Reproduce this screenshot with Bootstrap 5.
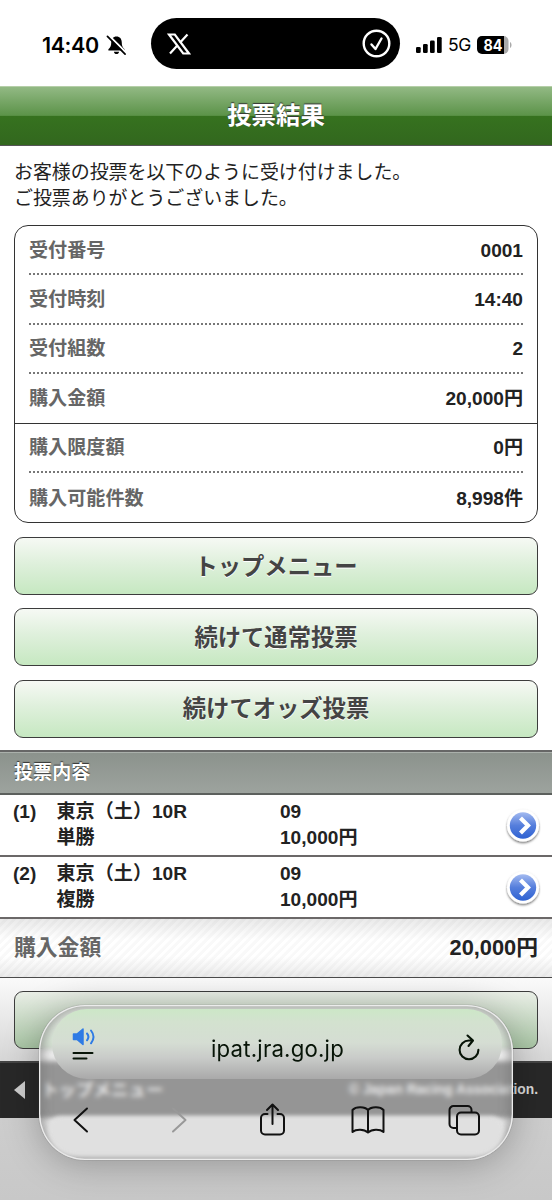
<!DOCTYPE html>
<html lang="ja">
<head>
<meta charset="utf-8">
<meta name="viewport" content="width=device-width, initial-scale=1">
<title>投票結果</title>
<link href="https://cdn.jsdelivr.net/npm/bootstrap@5.3.0/dist/css/bootstrap.min.css" rel="stylesheet">
<style>
body{font-family:"Liberation Sans","Noto Sans CJK JP",sans-serif;font-size:19.1px;line-height:26px;color:#222;background:#fff}
.screen{width:552px;height:1200px}
.status-bar{height:86px;padding-top:3px;color:#000;font-family:Inter,sans-serif}
.clock{font-size:21.5px;font-weight:600;letter-spacing:-.4px;width:60px;margin-left:42px}
.island{width:249px;height:51px;border-radius:26px;background:#000;margin:-2px 0 0 24px;padding:0 9px 0 16px}
.net{font-size:17.5px;margin-left:6px;width:24px;letter-spacing:-.3px}
.title-bar{height:60px;border-top:1px solid #b5cfa8;border-bottom:1px solid #555;background:linear-gradient(#92b984 0,#5c9349 49%,#36721f 50%,#32671e 100%);color:#fff;font-size:24.4px;font-weight:700;text-shadow:0 -1px 1px #333}
.intro{padding:14px 14px 0;height:79px;font-size:18.95px;letter-spacing:-.02px}
.summary{margin:0 14px;border:1.5px solid #333;border-radius:14px;height:298px}
.line{height:49.4px;margin:0 14px;padding-top:2px;border-bottom:2px dotted #777;font-weight:700;color:#222}
.line .name,.total .name{color:#666}
.line.wide{margin:0;padding:2px 14px 0;border-bottom:1.5px solid #333}
.btn.menu{--bs-btn-color:#444;--bs-btn-border-color:#3c3c3c;--bs-btn-border-radius:9px;height:58px;padding-top:8px;border-width:1.5px;background:linear-gradient(#f6f9f4,#dff0dc 45%,#c6e8c1);font-size:23.3px;font-weight:700;text-shadow:0 1px 0 #fff}
.stack{padding:14px 14px 12px;gap:13.4px}
.section-bar{height:45px;padding:1px 14px 0;border-top:2px solid #666;border-bottom:2px solid #5c605d;background:linear-gradient(#8b928c,#9da39e);box-shadow:inset 0 1px #aab0ab;color:#fff;font-weight:700;text-shadow:0 -1px 1px #333}
.bet{display:grid;grid-template-columns:43.5px 223.5px 1fr 37px;height:62px;padding:4px 12px 0 13px;border-bottom:2px solid #6b6868;font-weight:700}
.bet svg{margin-top:7px}
.total{height:59px;padding:1px 14px 0;border-bottom:1.5px solid #4b4b4b;background:linear-gradient(#00000016,#0000 35%,#0000 65%,#00000014),repeating-linear-gradient(135deg,#fff 0 2.5px,#f9f9f9 3.5px 6px);font-size:21.8px;font-weight:700}
.tail{height:83px;padding:13.5px 14px 0;background:linear-gradient(#fafafa,#d6d6d6)}
.tail .btn.menu{background:linear-gradient(#e9eee6,#a8c5a4)}
.foot{height:57px;padding:0 14px;background:#282828;border-top:2px solid #444;color:#d8d8d8}
.foot-menu{font-size:17.5px;font-weight:700;gap:16px}
.copy{font-size:13.8px;font-weight:700}
.under{background:linear-gradient(#cdcdcd,#c8c8c8)}
.toolbar{left:39px;top:1005px;width:474px;height:155px;border-radius:46px;background:rgba(255,255,255,.51);backdrop-filter:blur(2.5px);box-shadow:0 4px 36px rgba(0,0,0,.27),0 0 1px #555,inset 0 0 0 1.3px #ececec,inset 0 0 10px 5px rgba(115,115,115,.55);z-index:2}
.address{height:70px;margin:4px 11px 0 13px;border-radius:36px;background:linear-gradient(#cce7c7 0,#d3e2cf 18%,#d5ddd3 48%,#c9cbc9 70%,#a9a9a9 100%);padding:10px 21px 0 20px;font-family:Inter,sans-serif;font-size:22.2px;color:#071407}
.url{letter-spacing:.2px;padding-left:2px}
.speak{margin-top:-10px}
.keys{padding:23px 33px 0 26px}
.glow{left:9px;right:9px;bottom:4px;height:40px;border-radius:20px 20px 40px 40px;background:#e0e0e0;filter:blur(2px)}
</style>
</head>
<body>
<svg width="0" height="0" class="position-absolute"><defs>
<linearGradient id="ball" x2="0" y2="1"><stop stop-color="#a3baf0"/><stop offset=".5" stop-color="#557edc"/><stop offset="1" stop-color="#2f62d2"/></linearGradient>
<filter id="soft" x="-20%" y="-20%" width="140%" height="150%"><feDropShadow dx="0" dy="1.5" stdDeviation="1.2" flood-opacity=".55"/></filter>
<symbol id="go" viewBox="0 0 40 40"><circle cx="20" cy="19.500" r="16" fill="#fff" filter="url(#soft)"/><circle cx="20" cy="19.500" r="13.200" fill="url(#ball)"/><path d="M17.500 12l7.500 7.500-7.500 7.500" fill="none" stroke="#fff" stroke-width="4.200"/></symbol>
</defs></svg>
<main class="screen position-relative overflow-hidden d-flex flex-column">
  <header class="status-bar d-flex align-items-center flex-shrink-0">
    <div class="clock">14:40</div>
    <svg class="ms-1" width="21" height="22" viewBox="1 1 22 22"><path d="M12 3c-3.500 0-5.500 2.500-5.500 6 0 4-1 5.500-3 7.500v1.200h17v-1.200c-2-2-3-3.500-3-7.500 0-3.500-2-6-5.500-6zM9.300 19h5.400c-.3 3.200-5.100 3.200-5.400 0z"/><path d="M4.500 2.500l18 18" stroke="#fff" stroke-width="2.200"/><path d="M2.500 3l18.500 18.500" stroke="#000" stroke-width="1.800" stroke-linecap="round"/></svg>
    <div class="island d-flex align-items-center justify-content-between">
      <svg width="24" height="24" viewBox="0 0 24 24"><path d="M2 2.500h5.800L22 21.500h-5.800zM20.500 2.500l-7.800 8.600M3 21.500l8-8.800" fill="none" stroke="#fff" stroke-width="2.200"/></svg>
      <svg width="29" height="29" viewBox="0 0 29 29" fill="none" stroke="#fff" stroke-width="2.400" stroke-linecap="round" stroke-linejoin="round"><circle cx="14.500" cy="14.500" r="12.800"/><path d="M9.500 15.500l4 4.500L19.500 9.500"/></svg>
    </div>
    <svg class="ms-3" width="26" height="16" viewBox="0 0 26 16"><rect y="10" width="4.700" height="6" rx="1.300"/><rect x="7" y="7" width="4.700" height="9" rx="1.300"/><rect x="14" y="3.500" width="4.700" height="12.500" rx="1.300"/><rect x="21" width="4.700" height="16" rx="1.300"/></svg>
    <div class="net">5G</div>
    <svg class="ms-1" width="38" height="20" viewBox="0 0 38 20"><path d="M26 1h1.500a5 5 0 0 1 5 5v8a5 5 0 0 1-5 5H26z" fill="#aaa"/><path d="M34 7c2 1 2 5 0 6z" fill="#aaa"/><path d="M6 1h22v18H6a5 5 0 0 1-5-5V6a5 5 0 0 1 5-5z"/><text x="17" y="15.500" text-anchor="middle" textLength="19" lengthAdjust="spacingAndGlyphs" font-family="Inter" font-size="15.500" font-weight="700" fill="#fff">84</text></svg>
  </header>
  <h1 class="title-bar d-flex align-items-center justify-content-center flex-shrink-0 m-0">投票結果</h1>
  <p class="intro m-0 flex-shrink-0">お客様の投票を以下のように受け付けました。<br>ご投票ありがとうございました。</p>
  <section class="summary flex-shrink-0">
    <div class="line d-flex align-items-center justify-content-between"><span class="name">受付番号</span><span>0001</span></div>
    <div class="line d-flex align-items-center justify-content-between"><span class="name">受付時刻</span><span>14:40</span></div>
    <div class="line d-flex align-items-center justify-content-between"><span class="name">受付組数</span><span>2</span></div>
    <div class="line wide d-flex align-items-center justify-content-between"><span class="name">購入金額</span><span>20,000円</span></div>
    <div class="line d-flex align-items-center justify-content-between"><span class="name">購入限度額</span><span>0円</span></div>
    <div class="line border-0 d-flex align-items-center justify-content-between"><span class="name">購入可能件数</span><span>8,998件</span></div>
  </section>
  <nav class="stack d-grid flex-shrink-0">
    <button class="btn menu">トップメニュー</button>
    <button class="btn menu">続けて通常投票</button>
    <button class="btn menu">続けてオッズ投票</button>
  </nav>
  <div class="section-bar d-flex align-items-center flex-shrink-0">投票内容</div>
  <div class="bet flex-shrink-0"><span>(1)</span><span>東京（土）10R<br>単勝</span><span>09<br>10,000円</span><svg width="40" height="40"><use href="#go"/></svg></div>
  <div class="bet flex-shrink-0"><span>(2)</span><span>東京（土）10R<br>複勝</span><span>09<br>10,000円</span><svg width="40" height="40"><use href="#go"/></svg></div>
  <div class="total d-flex align-items-center justify-content-between flex-shrink-0"><span class="name">購入金額</span><span>20,000円</span></div>
  <div class="tail flex-shrink-0"><button class="btn menu w-100" aria-label="メニュー"></button></div>
  <footer class="foot d-flex align-items-center justify-content-between flex-shrink-0">
    <span class="foot-menu d-flex align-items-center"><svg width="11" height="18" viewBox="0 0 11 18"><path d="M11 0v18L0 9z" fill="#ccc"/></svg>トップメニュー</span>
    <span class="copy">© Japan Racing Association.</span>
  </footer>
  <div class="under flex-grow-1"></div>

  <div class="toolbar position-absolute overflow-hidden">
    <div class="glow position-absolute"></div>
    <div class="address position-relative d-flex align-items-center justify-content-between">
      <svg class="speak" width="26" height="34" viewBox="0 0 26 34"><path d="M1.500 7h3.500L11 2v15.500L5 12.500H1.500z" fill="#2f7be5" stroke="#2f7be5" stroke-width="1.500" stroke-linejoin="round"/><path d="M15 6.500q2.800 3.300 0 6.800M19 3.500q5 6.300 0 12.800" fill="none" stroke="#2f7be5" stroke-width="2" stroke-linecap="round"/><path d="M1.500 26h19M1.500 31.500h13" stroke="#071407" stroke-width="2" stroke-linecap="round"/></svg>
      <span class="url">ipat.jra.go.jp</span>
      <svg width="26" height="30" viewBox="0 0 26 30" fill="none" stroke="#071407" stroke-width="2.100" stroke-linecap="round" stroke-linejoin="round"><path d="M17 6.500h-3a9.400 9.400 0 1 0 9.400 9.400M12.500 1.500L18 6.500l-4.500 5.500"/></svg>
    </div>
    <div class="keys position-relative d-flex justify-content-between">
      <svg width="32" height="36" viewBox="0 0 32 36" fill="none" stroke="#111" stroke-width="2" stroke-linecap="round" stroke-linejoin="round"><path d="M22 6.500L9.500 18 22 29.500"/></svg>
      <svg width="32" height="36" viewBox="0 0 32 36" fill="none" stroke="#999" stroke-width="2" stroke-linecap="round" stroke-linejoin="round"><path d="M13 6.500L25.500 18 13 29.500"/></svg>
      <svg width="32" height="36" viewBox="0 0 32 36" fill="none" stroke="#111" stroke-width="2" stroke-linecap="round" stroke-linejoin="round"><path d="M11.500 12H9a4 4 0 0 0-4 4v12.500a4 4 0 0 0 4 4h15a4 4 0 0 0 4-4V16a4 4 0 0 0-4-4h-2.500M16.500 22V2.500M11 8l5.500-5.500L22 8"/></svg>
      <svg width="34" height="36" viewBox="0 0 34 36" fill="none" stroke="#111" stroke-width="2" stroke-linejoin="round"><path d="M17 8C14 4.500 5 4 1.500 8v22C5 27 13 27 17 30.500zM17 8C20 4.500 29 4 32.500 8v22C29 27 21 27 17 30.500z"/></svg>
      <svg width="32" height="36" viewBox="0 0 32 36" fill="none" stroke="#111" stroke-width="2" stroke-linejoin="round"><rect x="9" y="10.500" width="22" height="22" rx="4"/><path d="M8.500 26H5.500a4 4 0 0 1-4-4V8a4 4 0 0 1 4-4h14a4 4 0 0 1 4 4v2"/></svg>
    </div>
  </div>
</main>
<script src="https://cdn.jsdelivr.net/npm/bootstrap@5.3.0/dist/js/bootstrap.bundle.min.js"></script>
</body>
</html>
